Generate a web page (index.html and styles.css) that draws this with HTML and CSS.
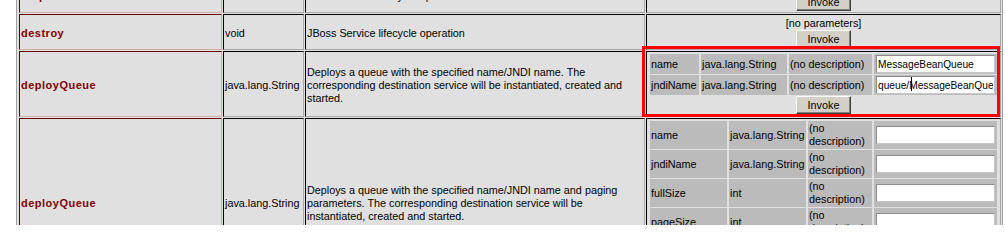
FILE: index.html
```html
<!DOCTYPE html>
<html>
<head>
<meta charset="utf-8">
<link rel="stylesheet" href="styles.css">
</head>
<body>
<table class="ops">
  <colgroup>
    <col class="w-op"><col class="w-ret"><col class="w-desc"><col class="w-params">
  </colgroup>
  <tr>
    <td class="op">stop</td>
    <td class="cell">void</td>
    <td class="cell">JBoss Service lifecycle operation</td>
    <td class="cell pcell center">
      <div class="noparams">[no parameters]</div>
      <button class="invoke">Invoke</button>
    </td>
  </tr>
  <tr>
    <td class="op">destroy</td>
    <td class="cell">void</td>
    <td class="cell">JBoss Service lifecycle operation</td>
    <td class="cell pcell center">
      <div class="noparams">[no parameters]</div>
      <button class="invoke">Invoke</button>
    </td>
  </tr>
  <tr>
    <td class="op">deployQueue</td>
    <td class="cell">java.lang.String</td>
    <td class="cell">Deploys a queue with the specified name/JNDI name. The corresponding destination service will be instantiated, created and started.</td>
    <td class="cell pcell">
      <table class="params">
        <colgroup>
          <col class="p1-name"><col class="p1-type"><col class="p1-desc"><col class="p-input">
        </colgroup>
        <tr>
          <td class="pc">name</td>
          <td class="pc">java.lang.String</td>
          <td class="pc">(no description)</td>
          <td class="pc"><input class="field" type="text" value="MessageBeanQueue"></td>
        </tr>
        <tr>
          <td class="pc">jndiName</td>
          <td class="pc">java.lang.String</td>
          <td class="pc">(no description)</td>
          <td class="pc"><input class="field" type="text" value="queue/MessageBeanQueue"></td>
        </tr>
        <tr>
          <td class="act" colspan="4"><button class="invoke">Invoke</button></td>
        </tr>
      </table>
    </td>
  </tr>
  <tr>
    <td class="op">deployQueue</td>
    <td class="cell">java.lang.String</td>
    <td class="cell">Deploys a queue with the specified name/JNDI name and paging parameters. The corresponding destination service will be instantiated, created and started.</td>
    <td class="cell pcell">
      <table class="params">
        <colgroup>
          <col class="p2-name"><col class="p2-type"><col class="p2-desc"><col class="p-input">
        </colgroup>
        <tr>
          <td class="pc">name</td>
          <td class="pc">java.lang.String</td>
          <td class="pc">(no description)</td>
          <td class="pc"><input class="field" type="text" value=""></td>
        </tr>
        <tr>
          <td class="pc">jndiName</td>
          <td class="pc">java.lang.String</td>
          <td class="pc">(no description)</td>
          <td class="pc"><input class="field" type="text" value=""></td>
        </tr>
        <tr>
          <td class="pc">fullSize</td>
          <td class="pc">int</td>
          <td class="pc">(no description)</td>
          <td class="pc"><input class="field" type="text" value=""></td>
        </tr>
        <tr>
          <td class="pc">pageSize</td>
          <td class="pc">int</td>
          <td class="pc">(no description)</td>
          <td class="pc"><input class="field" type="text" value=""></td>
        </tr>
        <tr>
          <td class="pc">downCacheSize</td>
          <td class="pc">int</td>
          <td class="pc">(no description)</td>
          <td class="pc"><input class="field" type="text" value=""></td>
        </tr>
        <tr>
          <td class="act" colspan="4"><button class="invoke">Invoke</button></td>
        </tr>
      </table>
    </td>
  </tr>
</table>
<div class="caret"></div>
<div class="highlight"></div>
</body>
</html>
```

FILE: styles.css
```css
html, body {
  margin: 0;
  padding: 0;
  background: #ffffff;
  height: 225px;
  overflow: hidden;
}

body {
  position: relative;
  font-family: "Liberation Sans", Arial, sans-serif;
  font-size: 10.8px;
  line-height: 13px;
  color: #000000;
}

.ops {
  margin: -25px 0 0 16px;
  width: 987px;
  table-layout: fixed;
  border-collapse: separate;
  border-spacing: 1px;
  padding-left: 1px;
  background: #e0e0e0;
  border: 1px solid #a0a0a0;
}

.w-op { width: 203px; }
.w-ret { width: 81px; }
.w-desc { width: 340px; }
.w-params { width: 355px; }

.ops > tbody > tr > td {
  padding: 2px 1px 0 1px;
  vertical-align: middle;
  background: #e0e0e0;
}

.ops > tbody > tr > td.pcell {
  padding: 1px;
}

.op {
  border: 1px solid;
  border-color: #600000 #d8aaaa #d8aaaa #600000;
  color: #800000;
  font-weight: bold;
  font-size: 11px;
  letter-spacing: 0.5px;
}

.cell {
  border: 1px solid;
  border-color: #000000 #a8a8a8 #a8a8a8 #000000;
}

.center {
  text-align: center;
}

.noparams {
  line-height: 13px;
  padding-top: 1px;
}

.invoke {
  display: inline-block;
  width: 55px;
  height: 18px;
  margin: 0;
  padding: 0;
  vertical-align: top;
  font-family: "Liberation Sans", Arial, sans-serif;
  font-size: 10.8px;
  line-height: 14px;
  color: #000000;
  background: #d4d0c8;
  border: 1px solid;
  border-color: #ffffff #404040 #404040 #ffffff;
  box-shadow: inset -1px -1px 0 #808080;
  border-radius: 0;
}

.params {
  width: 100%;
  table-layout: fixed;
  border-collapse: separate;
  border-spacing: 2px 1px;
}

.p1-name { width: 49px; }
.p1-type { width: 86px; }
.p1-desc { width: 83px; }
.p2-name { width: 77px; }
.p2-type { width: 77px; }
.p2-desc { width: 64px; }
.p-input { width: 123px; }

.pc {
  background: #bbbbbb;
  padding: 1px;
  vertical-align: middle;
  white-space: normal;
  overflow: hidden;
}

.act {
  padding: 0;
  height: 18px;
  text-align: center;
  background: transparent;
}

.field {
  display: block;
  box-sizing: border-box;
  width: 119px;
  height: 18px;
  margin: 0 0 0 1px;
  padding: 0 1px;
  font-family: "Liberation Sans", Arial, sans-serif;
  font-size: 10.2px;
  color: #000000;
  background: #ffffff;
  border: 1px solid;
  border-color: #8c8c8c #c8c8c8 #c8c8c8 #8c8c8c;
  border-radius: 0;
  outline: none;
}

.caret {
  position: absolute;
  left: 911px;
  top: 77px;
  width: 1px;
  height: 14px;
  background: #000000;
}

.highlight {
  position: absolute;
  left: 642px;
  top: 46px;
  width: 358px;
  height: 71px;
  box-sizing: border-box;
  border: 3px solid #ff0000;
  pointer-events: none;
}
```
